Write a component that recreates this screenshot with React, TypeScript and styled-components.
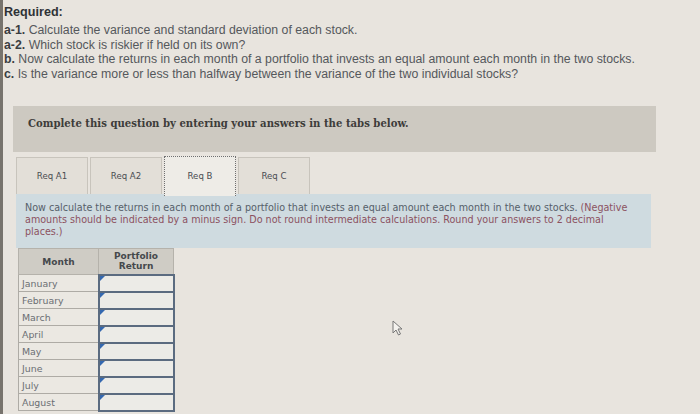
import styled, { createGlobalStyle } from 'styled-components';

const GlobalStyle = createGlobalStyle`
  html, body {
    margin: 0;
    padding: 0;
    background: #e8e4de;
  }
  body {
    width: 700px;
    height: 414px;
    overflow: hidden;
  }
`;

const requirements = [
  { tag: 'a-1.', text: 'Calculate the variance and standard deviation of each stock.' },
  { tag: 'a-2.', text: 'Which stock is riskier if held on its own?' },
  {
    tag: 'b.',
    text: 'Now calculate the returns in each month of a portfolio that invests an equal amount each month in the two stocks.',
  },
  {
    tag: 'c.',
    text: 'Is the variance more or less than halfway between the variance of the two individual stocks?',
  },
];

const tabs = ['Req A1', 'Req A2', 'Req B', 'Req C'];
const months = ['January', 'February', 'March', 'April', 'May', 'June', 'July', 'August'];

export default function App() {
  return (
    <>
      <GlobalStyle />
      <Page>
        <Required>
          <Heading>Required:</Heading>
          {requirements.map((r) => (
            <ReqLine key={r.tag}>
              <b>{r.tag}</b> {r.text}
            </ReqLine>
          ))}
        </Required>

        <Question>
          <Banner>Complete this question by entering your answers in the tabs below.</Banner>

          <TabRow>
            {tabs.map((t) => (
              <Tab key={t} $active={t === 'Req B'}>
                {t}
              </Tab>
            ))}
          </TabRow>

          <Instructions>
            Now calculate the returns in each month of a portfolio that invests an equal amount each
            month in the two stocks. <Note>(Negative amounts should be indicated by a minus sign. Do
            not round intermediate calculations. Round your answers to 2 decimal places.)</Note>
          </Instructions>

          <Table>
            <thead>
              <tr>
                <Head $w={79}>Month</Head>
                <Head $w={74}>
                  Portfolio
                  <br />
                  Return
                </Head>
              </tr>
            </thead>
            <tbody>
              {months.map((m) => (
                <tr key={m}>
                  <MonthCell>{m}</MonthCell>
                  <InputCell>
                    <Marker />
                  </InputCell>
                </tr>
              ))}
            </tbody>
          </Table>
        </Question>

        <Cursor width="11" height="16" viewBox="0 0 11 16">
          <path d="M1 1 L1 13 L4 10 L6.5 15 L8.5 14 L6 9 L10 9 Z" fill="#f4f2ee" stroke="#777" strokeWidth="1" />
        </Cursor>
      </Page>
    </>
  );
}

const Page = styled.div`
  position: relative;
  height: 414px;
  box-sizing: border-box;
  border-left: 3px solid #77736d;
  padding: 5px 0 0 1px;
  font-family: 'Liberation Sans', Arial, sans-serif;
`;

const Required = styled.div`
  color: #55585c;
  font-size: 12.3px;
  line-height: 14.8px;
`;

const Heading = styled.div`
  font-weight: 700;
  color: #2f3236;
  font-size: 12.6px;
  margin-bottom: 3px;
`;

const ReqLine = styled.div`
  b {
    color: #3a3d41;
  }
`;

const Question = styled.div`
  margin: 24px 0 0 9px;
  width: 643px;
`;

const Banner = styled.div`
  height: 46px;
  box-sizing: border-box;
  background: #cdc9c1;
  padding: 12px 15px;
  font-family: 'DejaVu Serif', Georgia, serif;
  font-weight: 700;
  font-size: 10.1px;
  color: #3d3c3a;
`;

const TabRow = styled.div`
  display: flex;
  gap: 2px;
  margin: 4px 0 0 3px;
  height: 38px;
  align-items: flex-end;
`;

const Tab = styled.div<{ $active?: boolean }>`
  width: 72px;
  height: ${(p) => (p.$active ? '40px' : '37px')};
  box-sizing: border-box;
  display: flex;
  align-items: center;
  justify-content: center;
  font-family: 'DejaVu Sans', Verdana, sans-serif;
  font-size: 8.6px;
  color: #4a4d52;
  background: ${(p) => (p.$active ? '#eeece7' : '#e3dfd8')};
  border: ${(p) => (p.$active ? '1px dotted #6f6f70' : '1px solid #c8c4bc')};
  border-bottom: none;
  margin-bottom: ${(p) => (p.$active ? '-2px' : '0')};
  position: relative;
`;

const Instructions = styled.div`
  margin-left: 3px;
  width: 635px;
  height: 54px;
  box-sizing: border-box;
  background: #cfdbe0;
  padding: 8px 9px;
  font-family: 'DejaVu Sans', Verdana, sans-serif;
  font-size: 9.6px;
  line-height: 12px;
  color: #56606a;
`;

const Note = styled.span`
  color: #8c5260;
`;

const Table = styled.table`
  margin: 0 0 0 5px;
  border-collapse: collapse;
  font-family: 'DejaVu Sans', Verdana, sans-serif;
  font-size: 9.4px;
`;

const Head = styled.th<{ $w: number }>`
  width: ${(p) => p.$w}px;
  height: 25px;
  padding: 0;
  background: #cfccc5;
  border: 1px solid #b5b2ab;
  color: #45484c;
  font-weight: 700;
  font-size: 9px;
  line-height: 10px;
`;

const MonthCell = styled.td`
  height: 16px;
  padding: 0 0 0 3px;
  background: #ebe8e2;
  border: 1px solid #aeaba5;
  color: #6a6e73;
  text-align: left;
`;

const InputCell = styled.td`
  position: relative;
  padding: 0;
  background: #ecebe7;
  border: 2px solid #5b6b80;
`;

const Marker = styled.span`
  position: absolute;
  left: 0;
  top: 0;
  width: 0;
  height: 0;
  border-top: 5px solid #3468b0;
  border-right: 5px solid transparent;
`;

const Cursor = styled.svg`
  position: absolute;
  left: 389px;
  top: 320px;
`;
